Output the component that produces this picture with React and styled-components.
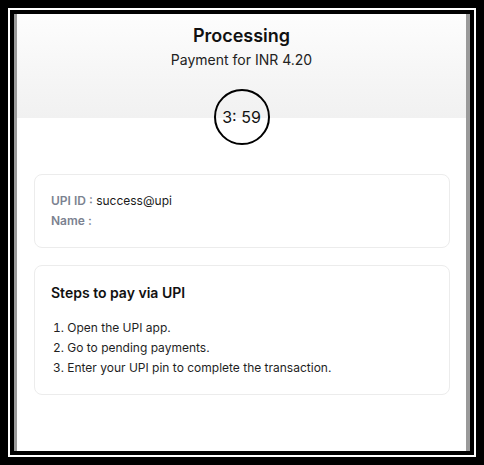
import React from "react";
import styled, { createGlobalStyle } from "styled-components";

const Global = createGlobalStyle`
  html, body { margin: 0; padding: 0; background: #000; }
  * { box-sizing: border-box; }
  body { font-family: Inter, "Noto Sans", Arial, sans-serif; }
`;

const Frame = styled.div`
  width: 484px;
  height: 465px;
  padding: 8px;
  background: #000;
`;

const WhiteRing = styled.div`
  height: 100%;
  border: 2px solid #fff;
`;

const Screen = styled.div`
  height: 100%;
  border: 4px solid #000;
  background: #9a9a9a;
  padding: 0 4px 0 3px;
`;

const Page = styled.div`
  height: 100%;
  background: #fff;
  overflow: hidden;
  display: flex;
  flex-direction: column;
`;

const Header = styled.div`
  display: flex;
  flex-direction: column;
  align-items: center;
  padding-top: 11px;
  background: linear-gradient(#fdfdfd 0%, #f8f8f8 40%, #f1f1f1 100%);
`;

const Title = styled.h1`
  margin: 0;
  font-size: 18px;
  line-height: 22px;
  font-weight: 600;
  color: #111;
`;

const Subtitle = styled.div`
  margin-top: 3px;
  font-size: 14px;
  line-height: 20px;
  color: #222;
`;

const Timer = styled.div`
  margin-top: 19px;
  margin-bottom: -27px;
  width: 56px;
  height: 56px;
  border: 2px solid #000;
  border-radius: 50%;
  display: flex;
  align-items: center;
  justify-content: center;
  font-size: 16px;
  color: #111;
`;

const Body = styled.div`
  display: flex;
  flex-direction: column;
  gap: 17px;
  padding: 56px 16px 0 17px;
`;

const Card = styled.div`
  border: 1px solid #ececec;
  border-radius: 8px;
  padding: 16px;
`;

const InfoLine = styled.div`
  font-size: 12px;
  line-height: 20px;
  color: #1a1a1a;
`;

const Label = styled.span`
  color: #7b8290;
  font-weight: 600;
`;

const CardTitle = styled.h2`
  margin: 0;
  font-size: 14px;
  line-height: 22px;
  font-weight: 600;
  color: #111;
`;

const Steps = styled.ol`
  margin: 14px 0 0;
  padding: 0 0 0 2px;
  list-style: decimal inside;
`;

const Step = styled.li`
  font-size: 12px;
  line-height: 20px;
  color: #1f1f1f;
`;

export default function App() {
  return (
    <>
      <Global />
      <Frame>
        <WhiteRing>
          <Screen>
            <Page>
              <Header>
                <Title>Processing</Title>
                <Subtitle>Payment for INR 4.20</Subtitle>
                <Timer>3: 59</Timer>
              </Header>
              <Body>
                <Card>
                  <InfoLine>
                    <Label>UPI ID :</Label> success@upi
                  </InfoLine>
                  <InfoLine>
                    <Label>Name :</Label>
                  </InfoLine>
                </Card>
                <Card>
                  <CardTitle>Steps to pay via UPI</CardTitle>
                  <Steps>
                    <Step>Open the UPI app.</Step>
                    <Step>Go to pending payments.</Step>
                    <Step>Enter your UPI pin to complete the transaction.</Step>
                  </Steps>
                </Card>
              </Body>
            </Page>
          </Screen>
        </WhiteRing>
      </Frame>
    </>
  );
}
